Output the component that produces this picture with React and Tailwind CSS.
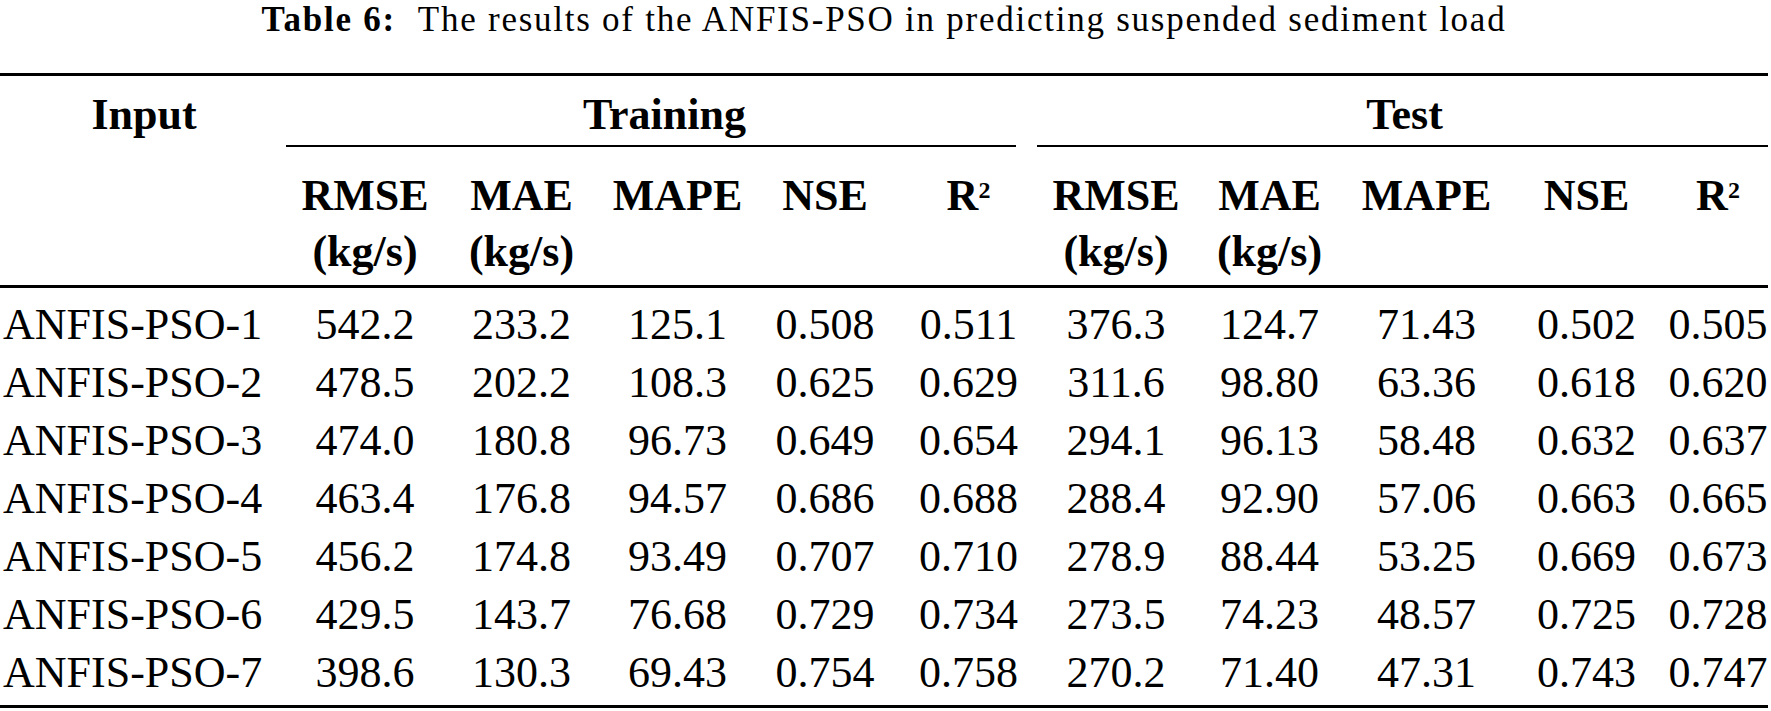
import React from "react";

const cols =
  "grid grid-cols-[288px_154px_159px_153px_142px_145px_150px_157px_157px_163px_100px]";

const rows = [
  ["ANFIS-PSO-1", "542.2", "233.2", "125.1", "0.508", "0.511", "376.3", "124.7", "71.43", "0.502", "0.505"],
  ["ANFIS-PSO-2", "478.5", "202.2", "108.3", "0.625", "0.629", "311.6", "98.80", "63.36", "0.618", "0.620"],
  ["ANFIS-PSO-3", "474.0", "180.8", "96.73", "0.649", "0.654", "294.1", "96.13", "58.48", "0.632", "0.637"],
  ["ANFIS-PSO-4", "463.4", "176.8", "94.57", "0.686", "0.688", "288.4", "92.90", "57.06", "0.663", "0.665"],
  ["ANFIS-PSO-5", "456.2", "174.8", "93.49", "0.707", "0.710", "278.9", "88.44", "53.25", "0.669", "0.673"],
  ["ANFIS-PSO-6", "429.5", "143.7", "76.68", "0.729", "0.734", "273.5", "74.23", "48.57", "0.725", "0.728"],
  ["ANFIS-PSO-7", "398.6", "130.3", "69.43", "0.754", "0.758", "270.2", "71.40", "47.31", "0.743", "0.747"],
];

const R2 = () => (
  <span>
    R<sup className="text-[24px]">2</sup>
  </span>
);

// one group of metric headers (Training or Test)
const metricHeads = [
  ["RMSE", "(kg/s)"],
  ["MAE", "(kg/s)"],
  ["MAPE"],
  ["NSE"],
  ["R2"],
];

const HeadCell = ({ lines }) => (
  <div className="text-center">
    {lines.map((l, i) => (
      <div key={i}>{l === "R2" ? <R2 /> : l}</div>
    ))}
  </div>
);

const App = () => {
  return (
    <div className="min-h-screen bg-white text-black font-[family-name:Liberation_Serif,serif]">
      <div className="w-[1768px]">
        {/* caption */}
        <div className="pt-[2px] text-center text-[35px] leading-[35px] tracking-[0.05em]">
          <span className="font-bold">Table 6:</span>
          <span className="ml-[22px]">
            The results of the ANFIS-PSO in predicting suspended sediment load
          </span>
        </div>

        <div className="mt-[36px] h-[3px] bg-black" />

        {/* group header row */}
        <div className={`${cols} mt-[17px] text-[44px] leading-[44px] font-bold`}>
          <div className="text-center">Input</div>
          <div className="col-span-5 text-center">Training</div>
          <div className="col-span-5 text-center">Test</div>
        </div>

        <div className="mt-[8px] flex gap-[21px] pl-[286px]">
          <div className="h-[2px] w-[730px] bg-black" />
          <div className="h-[2px] w-[731px] bg-black" />
        </div>

        {/* metric header row */}
        <div className={`${cols} mt-[21px] text-[44px] leading-[56px] font-bold`}>
          <div />
          {metricHeads.map((h, i) => (
            <HeadCell key={"a" + i} lines={h} />
          ))}
          {metricHeads.map((h, i) => (
            <HeadCell key={"b" + i} lines={h} />
          ))}
        </div>

        <div className="mt-[5px] h-[3px] bg-black" />

        {/* data */}
        <div className="mt-[8px] text-[44px] leading-[58px]">
          {rows.map((r) => (
            <div key={r[0]} className={cols}>
              {r.map((v, i) => (
                <div key={i} className={i === 0 ? "pl-[3px]" : "text-center"}>
                  {v}
                </div>
              ))}
            </div>
          ))}
        </div>

        <div className="mt-[3px] h-[3px] bg-black" />
      </div>
    </div>
  );
};

export default App;
